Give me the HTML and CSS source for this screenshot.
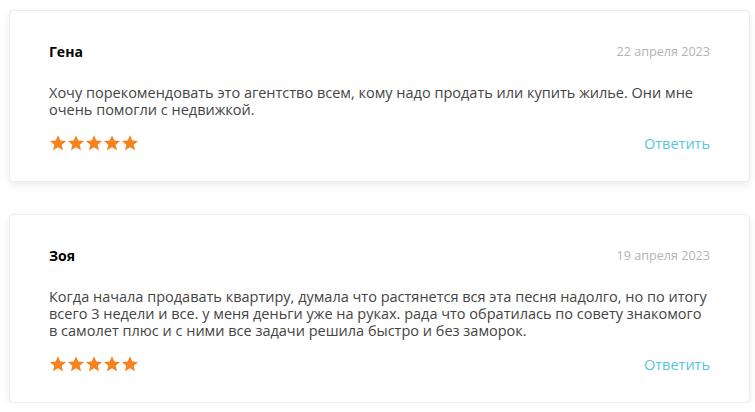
FILE: index.html
```html
<!DOCTYPE html>
<html lang="ru">
<head>
    <meta charset="UTF-8">
    <meta name="viewport" content="width=device-width, initial-scale=1.0">
    <title>Отзывы</title>
    <link rel="stylesheet" href="styles.css">
</head>
<body>
    <div class="reviews">
        <div class="review">
            <div class="review-head">
                <h3 class="review-name">Гена</h3>
                <span class="review-date">22 апреля 2023</span>
            </div>
            <p class="review-text">Хочу порекомендовать это агентство всем, кому надо продать или купить жилье. Они мне очень помогли с недвижкой.</p>
            <div class="review-foot">
                <div class="stars">
                    <svg viewBox="0 0 24 24"><path d="M12 1.6l3.1 7.1 7.7.6-5.9 5 1.8 7.5L12 17.8l-6.7 4 1.8-7.5-5.9-5 7.7-.6z"/></svg>
                    <svg viewBox="0 0 24 24"><path d="M12 1.6l3.1 7.1 7.7.6-5.9 5 1.8 7.5L12 17.8l-6.7 4 1.8-7.5-5.9-5 7.7-.6z"/></svg>
                    <svg viewBox="0 0 24 24"><path d="M12 1.6l3.1 7.1 7.7.6-5.9 5 1.8 7.5L12 17.8l-6.7 4 1.8-7.5-5.9-5 7.7-.6z"/></svg>
                    <svg viewBox="0 0 24 24"><path d="M12 1.6l3.1 7.1 7.7.6-5.9 5 1.8 7.5L12 17.8l-6.7 4 1.8-7.5-5.9-5 7.7-.6z"/></svg>
                    <svg viewBox="0 0 24 24"><path d="M12 1.6l3.1 7.1 7.7.6-5.9 5 1.8 7.5L12 17.8l-6.7 4 1.8-7.5-5.9-5 7.7-.6z"/></svg>
                </div>
                <a class="reply" href="#">Ответить</a>
            </div>
        </div>
        <div class="review">
            <div class="review-head">
                <h3 class="review-name">Зоя</h3>
                <span class="review-date">19 апреля 2023</span>
            </div>
            <p class="review-text">Когда начала продавать квартиру, думала что растянется вся эта песня надолго, но по итогу всего 3 недели и все. у меня деньги уже на руках. рада что обратилась по совету знакомого в самолет плюс и с ними все задачи решила быстро и без заморок.</p>
            <div class="review-foot">
                <div class="stars">
                    <svg viewBox="0 0 24 24"><path d="M12 1.6l3.1 7.1 7.7.6-5.9 5 1.8 7.5L12 17.8l-6.7 4 1.8-7.5-5.9-5 7.7-.6z"/></svg>
                    <svg viewBox="0 0 24 24"><path d="M12 1.6l3.1 7.1 7.7.6-5.9 5 1.8 7.5L12 17.8l-6.7 4 1.8-7.5-5.9-5 7.7-.6z"/></svg>
                    <svg viewBox="0 0 24 24"><path d="M12 1.6l3.1 7.1 7.7.6-5.9 5 1.8 7.5L12 17.8l-6.7 4 1.8-7.5-5.9-5 7.7-.6z"/></svg>
                    <svg viewBox="0 0 24 24"><path d="M12 1.6l3.1 7.1 7.7.6-5.9 5 1.8 7.5L12 17.8l-6.7 4 1.8-7.5-5.9-5 7.7-.6z"/></svg>
                    <svg viewBox="0 0 24 24"><path d="M12 1.6l3.1 7.1 7.7.6-5.9 5 1.8 7.5L12 17.8l-6.7 4 1.8-7.5-5.9-5 7.7-.6z"/></svg>
                </div>
                <a class="reply" href="#">Ответить</a>
            </div>
        </div>
    </div>
</body>
</html>
```

FILE: styles.css
```css
body{
    margin: 0;padding: 0;
    background: #fff;
    font-family: "Open Sans", "Noto Sans", sans-serif;
}
.reviews{
    display: flex;
    flex-direction: column;
    gap: 32px;
    padding: 10px 5px 0 9px;
}
.review{
    background: #fff;
    border: 1px solid #ececec;
    border-radius: 5px;
    box-shadow: 0 3px 8px rgba(0,0,0,0.08);
    padding: 30px 39px 28px 39px;
}
.review-head{
    display: flex;
    justify-content: space-between;
    align-items: center;
    height: 20px;
}
.review-name{
    margin: 0;
    font-size: 14px;
    font-weight: 700;
    color: #000;
}
.review-date{
    font-size: 12.6px;
    color: #b4b4b4;
}
.review-text{
    margin: 23px 0 0;
    font-size: 14.5px;
    line-height: 17px;
    color: #444;
}
.review-foot{
    display: flex;
    justify-content: space-between;
    align-items: center;
    height: 20px;
    margin-top: 15px;
}
.stars{
    display: flex;
    gap: 0;
}
.stars svg{
    width: 18px;
    height: 18px;
    fill: #f5821f;
}
.reply{
    font-size: 14.5px;
    color: #54c7dc;
    text-decoration: none;
}
```
